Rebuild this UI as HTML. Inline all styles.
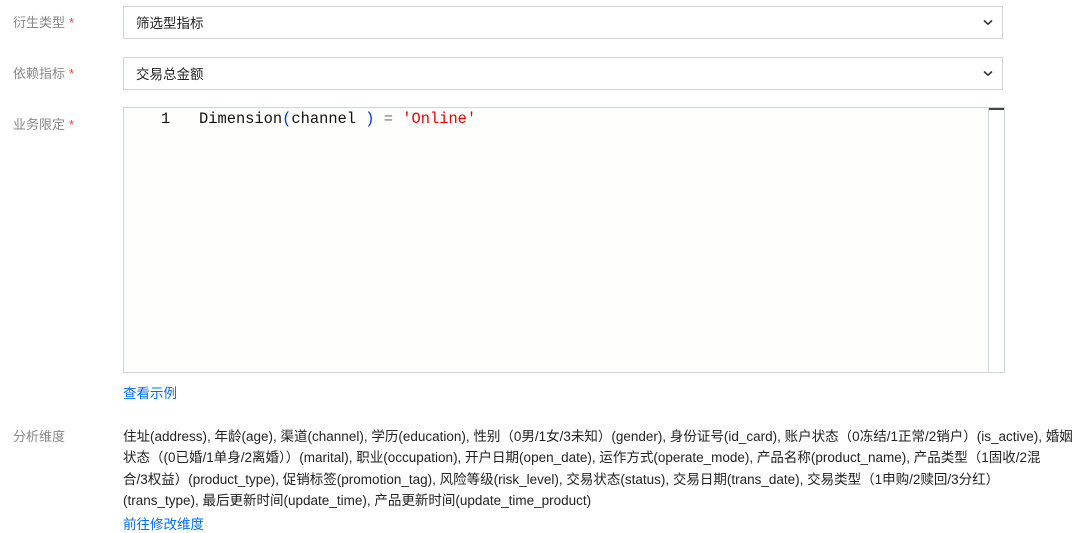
<!DOCTYPE html>
<html><head><meta charset="utf-8"><style>
body{margin:0;width:1082px;height:532px;background:#fff;font-family:"Liberation Sans","Noto Sans CJK SC",sans-serif;font-size:13px;color:#333;position:relative;overflow:hidden}
.lab{position:absolute;left:13px;color:#888;font-size:13px}
.lab i{color:#e54545;font-style:normal;margin-left:4px}
.sel{position:absolute;left:123px;width:878px;height:31px;border:1px solid #cfd5de;box-sizing:content-box}
.sel span{position:absolute;left:12px;top:5px;font-size:13.5px;color:#222}
.sel svg{position:absolute;right:9px;top:12px}
.ed{position:absolute;left:123px;top:107px;width:880px;height:264px;border:1px solid #cfd5de;background:#fefefd}
.sb{position:absolute;right:0;top:0;width:15px;height:264px;border-left:1px solid #cfd5de;background:#fff}
.sb:before{content:"";position:absolute;left:0;right:0;top:0;height:2px;background:#444}
.code{position:absolute;top:2px;font-family:"Liberation Mono","DejaVu Sans Mono",monospace;font-size:15.4px;color:#111;white-space:pre}
a{position:absolute;left:123px;color:#006eff;text-decoration:none;font-size:13.5px}
.txt{position:absolute;left:123px;top:426px;line-height:21.3px;font-size:13.5px;color:#222;white-space:nowrap}
</style></head><body>
<div class="lab" style="top:12px">衍生类型<i>*</i></div>
<div class="sel" style="top:6px"><span>筛选型指标</span><svg width="10" height="7" viewBox="0 0 10 7"><path d="M1 1.5L5 5.2 9 1.5" fill="none" stroke="#333" stroke-width="1.6"/></svg></div>
<div class="lab" style="top:63px">依赖指标<i>*</i></div>
<div class="sel" style="top:57px"><span>交易总金额</span><svg width="10" height="7" viewBox="0 0 10 7"><path d="M1 1.5L5 5.2 9 1.5" fill="none" stroke="#333" stroke-width="1.6"/></svg></div>
<div class="lab" style="top:114px">业务限定<i>*</i></div>
<div class="ed">
<div class="code" style="left:37px">1</div>
<div class="code" style="left:75px">Dimension<span style="color:#0431fa">(</span>channel <span style="color:#0431fa">)</span> <span style="color:#777">=</span> <span style="color:#e00">'Online'</span></div>
<div class="sb"></div>
</div>
<a style="top:382px">查看示例</a>
<div class="lab" style="top:426px">分析维度</div>
<div class="txt">住址(address), 年龄(age), 渠道(channel), 学历(education), 性别（0男/1女/3未知）(gender), 身份证号(id_card), 账户状态（0冻结/1正常/2销户）(is_active), 婚姻<br>状态（(0已婚/1单身/2离婚））(marital), 职业(occupation), 开户日期(open_date), 运作方式(operate_mode), 产品名称(product_name), 产品类型（1固收/2混<br>合/3权益）(product_type), 促销标签(promotion_tag), 风险等级(risk_level), 交易状态(status), 交易日期(trans_date), 交易类型（1申购/2赎回/3分红）<br>(trans_type), 最后更新时间(update_time), 产品更新时间(update_time_product)</div>
<a style="top:513px">前往修改维度</a>
</body></html>
